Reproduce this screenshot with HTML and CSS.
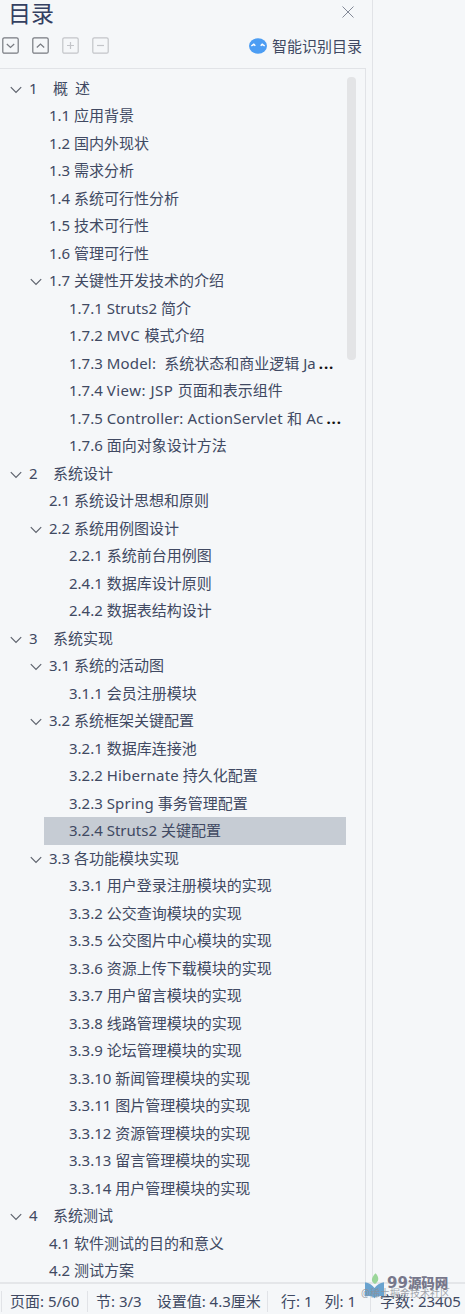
FILE: index.html
```html
<!DOCTYPE html>
<html lang="zh-CN">
<head>
  <meta charset="UTF-8">
  <title>目录</title>
  <link rel="stylesheet" href="styles.css">
</head>
<body>
  <svg class="defs" width="0" height="0">
    <symbol id="chevron" viewBox="0 0 12 8"><path d="M.8 1.2L6 6.4L11.2 1.2" /></symbol>
  </svg>

  <div class="workspace">
    <div class="sidebar">
      <div class="title-row">
        <h2>目录</h2>
        <svg class="close" viewBox="0 0 12 12"><path d="M.5 .5L11.5 11.5M11.5 .5L.5 11.5" /></svg>
      </div>

      <div class="toolbar">
        <svg class="tool" viewBox="0 0 17 17"><rect x=".8" y=".8" width="15.4" height="15.4" rx="1.5" /><path d="M4.8 7L8.5 10.5L12.2 7" /></svg>
        <svg class="tool" viewBox="0 0 17 17"><rect x=".8" y=".8" width="15.4" height="15.4" rx="1.5" /><path d="M4.8 10.5L8.5 7L12.2 10.5" /></svg>
        <svg class="tool disabled" viewBox="0 0 17 17"><rect x=".8" y=".8" width="15.4" height="15.4" rx="1.5" /><path d="M5 8.5H12M8.5 5V12" /></svg>
        <svg class="tool disabled" viewBox="0 0 17 17"><rect x=".8" y=".8" width="15.4" height="15.4" rx="1.5" /><path d="M5 8.5H12" /></svg>
        <div class="smart">
          <svg class="robot" viewBox="0 0 18 16">
            <ellipse cx="9" cy="8" rx="9" ry="7.7" fill="#4c9df3" />
            <path d="M2.3 8L4.8 6.3L6.3 7.8M11.7 7.8L13.2 6.3L15.7 8" fill="none" stroke="#fff" stroke-width="1.5" />
          </svg>
          <span>智能识别目录</span>
        </div>
      </div>

      <div class="outline">
        <div class="tree">
          <div class="item l1"><svg class="arrow"><use href="#chevron" /></svg><span class="num">1</span><span class="spaced">概 述</span></div>
          <div class="item l2">1.1 应用背景</div>
          <div class="item l2">1.2 国内外现状</div>
          <div class="item l2">1.3 需求分析</div>
          <div class="item l2">1.4 系统可行性分析</div>
          <div class="item l2">1.5 技术可行性</div>
          <div class="item l2">1.6 管理可行性</div>
          <div class="item l2"><svg class="arrow"><use href="#chevron" /></svg>1.7 关键性开发技术的介绍</div>
          <div class="item l3">1.7.1 Struts2 简介</div>
          <div class="item l3">1.7.2 <span class="wider">MVC </span>模式介绍</div>
          <div class="item l3">1.7.3 <span class="wide">Model:&nbsp; </span>系统状态和商业逻辑 Ja<b class="more">...</b></div>
          <div class="item l3">1.7.4 <span class="wider">View: JSP </span>页面和表示组件</div>
          <div class="item l3">1.7.5 <span class="wide">Controller: ActionServlet 和 Ac</span><b class="more">...</b></div>
          <div class="item l3">1.7.6 面向对象设计方法</div>
          <div class="item l1"><svg class="arrow"><use href="#chevron" /></svg><span class="num">2</span>系统设计</div>
          <div class="item l2">2.1 系统设计思想和原则</div>
          <div class="item l2"><svg class="arrow"><use href="#chevron" /></svg>2.2 系统用例图设计</div>
          <div class="item l3">2.2.1 系统前台用例图</div>
          <div class="item l3">2.4.1 数据库设计原则</div>
          <div class="item l3">2.4.2 数据表结构设计</div>
          <div class="item l1"><svg class="arrow"><use href="#chevron" /></svg><span class="num">3</span>系统实现</div>
          <div class="item l2"><svg class="arrow"><use href="#chevron" /></svg>3.1 系统的活动图</div>
          <div class="item l3">3.1.1 会员注册模块</div>
          <div class="item l2"><svg class="arrow"><use href="#chevron" /></svg>3.2 系统框架关键配置</div>
          <div class="item l3">3.2.1 数据库连接池</div>
          <div class="item l3">3.2.2 <span class="wide">Hibernate</span> 持久化配置</div>
          <div class="item l3">3.2.3 <span class="wide">Spring</span> 事务管理配置</div>
          <div class="item l3 selected">3.2.4 Struts2 关键配置</div>
          <div class="item l2"><svg class="arrow"><use href="#chevron" /></svg>3.3 各功能模块实现</div>
          <div class="item l3">3.3.1 用户登录注册模块的实现</div>
          <div class="item l3">3.3.2 公交查询模块的实现</div>
          <div class="item l3">3.3.5 公交图片中心模块的实现</div>
          <div class="item l3">3.3.6 资源上传下载模块的实现</div>
          <div class="item l3">3.3.7 用户留言模块的实现</div>
          <div class="item l3">3.3.8 线路管理模块的实现</div>
          <div class="item l3">3.3.9 论坛管理模块的实现</div>
          <div class="item l3">3.3.10 新闻管理模块的实现</div>
          <div class="item l3">3.3.11 图片管理模块的实现</div>
          <div class="item l3">3.3.12 资源管理模块的实现</div>
          <div class="item l3">3.3.13 留言管理模块的实现</div>
          <div class="item l3">3.3.14 用户管理模块的实现</div>
          <div class="item l1"><svg class="arrow"><use href="#chevron" /></svg><span class="num">4</span>系统测试</div>
          <div class="item l2">4.1 软件测试的目的和意义</div>
          <div class="item l2">4.2 测试方案</div>
        </div>
        <div class="scrollbar"></div>
      </div>
    </div>
    <div class="page-area"></div>
  </div>

  <div class="statusbar">
    <div class="cell page">页面: 5/60</div>
    <div class="cell section"><span>节: 3/3</span><span>设置值: 4.3厘米</span></div>
    <div class="cell cursor"><span>行: 1</span><span>列: 1</span></div>
    <div class="cell words">字数: 23405</div>
  </div>

  <div class="watermark">
    <svg class="logo" viewBox="0 0 18 24">
      <path d="M10 0C14 4 13 8 9.5 10C5 8 6 4 10 0Z" fill="#9bd69a" />
      <path d="M0 8.5C4 9 7 11 9 14C11 11 14 9 18 8.5V22C14 21 11 21.5 9 23.5C7 21.5 4 21 0 22Z" fill="#69a3cf" />
    </svg>
    <span class="site"><span class="digits">99</span>源码网</span>
    <span class="community">@稀土掘金技术社区</span>
  </div>
</body>
</html>
```
FILE: styles.css
```css
* {
  box-sizing: border-box;
}

body {
  margin: 0;
  height: 1314px;
  display: flex;
  flex-direction: column;
  position: relative;
  overflow: hidden;
  background: #f5f7f9;
  color: #404962;
  font-family: "Noto Sans", "Noto Sans CJK SC", sans-serif;
  font-size: 15px;
  white-space: nowrap;
}

.defs {
  position: absolute;
}

.workspace {
  display: flex;
  height: 1282px;
}

.sidebar {
  width: 373px;
  border-right: 1px solid #e1e3e7;
}

.page-area {
  flex: 1;
}

.title-row {
  display: flex;
  justify-content: space-between;
  height: 30px;
  padding: 0 18px 0 8px;
}

h2 {
  margin: 0;
  font-size: 23px;
  font-weight: 400;
  line-height: 26px;
  color: #344061;
}

.close {
  width: 12px;
  height: 12px;
  margin-top: 6px;
  fill: none;
  stroke: #838997;
  stroke-width: 1;
}

.toolbar {
  display: flex;
  align-items: center;
  gap: 13px;
  height: 38px;
  padding: 0 10px 7px 2px;
}

.tool {
  width: 17px;
  height: 17px;
  fill: none;
  stroke: #777a80;
  stroke-width: 1.2;
}

.tool.disabled {
  stroke: #c3c5c9;
}

.smart {
  display: flex;
  align-items: center;
  gap: 5px;
  margin-left: auto;
  line-height: 20px;
}

.robot {
  width: 18px;
  height: 16px;
}

.outline {
  display: flex;
  width: 366px;
  height: 1214px;
  border-top: 1px solid #e1e3e7;
  border-right: 1px solid #e1e3e7;
}

.tree {
  width: 346px;
  padding-top: 5.7px;
}

.item {
  display: flex;
  align-items: center;
  height: 27.5px;
  line-height: 27px;
  white-space: pre;
}

.l1 {
  padding-left: 29px;
}

.l2 {
  padding-left: 49px;
}

.l3 {
  padding-left: 69px;
}

.arrow {
  width: 12px;
  height: 8px;
  margin: 3px 7px 0 -19px;
  fill: none;
  stroke: #5d626d;
  stroke-width: 1.2;
}

.num {
  width: 24px;
}

.spaced {
  word-spacing: 3px;
}

.wide {
  letter-spacing: .2px;
}

.wider {
  letter-spacing: .5px;
}

.more {
  margin-left: 3px;
  color: #111;
  letter-spacing: .9px;
}

.selected {
  height: 28.5px;
  margin: -0.5px 0 -0.5px 44px;
  padding-left: 25px;
  background: #c6ccd4;
}

.scrollbar {
  width: 9px;
  height: 283px;
  margin: 8px 0 0 1px;
  border-radius: 4px;
  background: #e3e4e6;
}

.statusbar {
  display: flex;
  align-items: center;
  height: 32px;
  border-top: 2px solid #e4e6e9;
  padding: 0 0 0 1px;
  background: #f5f7f9;
}

.cell {
  display: flex;
  height: 21px;
  margin-top: 4px;
  padding-left: 9px;
  border-left: 1px solid #e1e3e7;
  line-height: 20px;
}

.page {
  width: 86px;
  padding-left: 8px;
}

.section {
  width: 180px;
  padding-left: 8px;
  gap: 15px;
}

.cursor {
  width: 103px;
  padding-left: 13px;
  gap: 12px;
}

/* site mark laid over the status bar */
.watermark {
  position: absolute;
  left: 361px;
  top: 1273px;
  width: 96px;
  height: 26px;
}

.logo {
  position: absolute;
  left: 4px;
  top: 0;
  width: 19px;
  height: 26px;
}

.site {
  position: absolute;
  left: 26px;
  top: 0;
  font-size: 13.5px;
  font-weight: 900;
  line-height: 20px;
  color: #77778b;
}

.digits {
  font-family: "DejaVu Sans", sans-serif;
  font-size: 15px;
}

.community {
  position: absolute;
  left: 0;
  top: 12px;
  font-size: 10px;
  line-height: 16px;
  color: #8d9199;
  opacity: .8;
}
```
